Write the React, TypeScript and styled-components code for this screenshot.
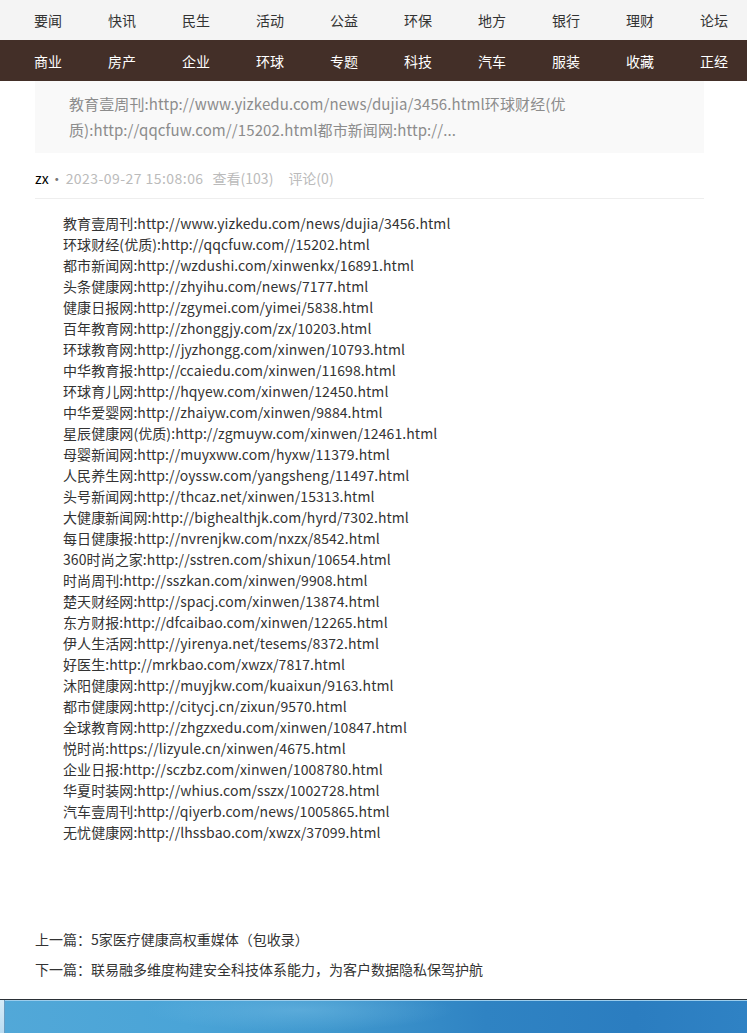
import React from 'react';
import styled, { createGlobalStyle } from 'styled-components';

const Global = createGlobalStyle`
  html, body { margin: 0; padding: 0; background: #fff; }
  body { font-family: "Noto Sans CJK SC", "Microsoft YaHei", sans-serif; }
  p { margin: 0; }
`;

const Page = styled.div`
  display: flex;
  flex-direction: column;
  min-height: 1033px;
  overflow: hidden;
`;

const Nav = styled.nav<{ $dark?: boolean }>`
  display: flex;
  align-items: center;
  gap: 46px;
  padding-left: 34px;
  height: ${p => (p.$dark ? '41px' : '40px')};
  background: ${p => (p.$dark ? '#432f28' : '#f4f4f4')};
`;

const NavLink = styled.a<{ $dark?: boolean }>`
  flex-shrink: 0;
  font-size: 14px;
  line-height: 20px;
  white-space: nowrap;
  text-decoration: none;
  color: ${p => (p.$dark ? '#ffffff' : '#333333')};
`;

const Main = styled.main`
  padding: 0 43px 0 35px;
`;

const Summary = styled.div`
  background: #f9f9f9;
  padding: 10px 34px;
  font-size: 15px;
  line-height: 26px;
  letter-spacing: 0.1px;
  color: #8c8c8c;
`;

const SummaryLine = styled.p`
  white-space: nowrap;
  overflow: hidden;
`;

const Meta = styled.div`
  display: flex;
  align-items: center;
  padding: 15px 0 10px;
  border-bottom: 1px solid #eeeeee;
  font-size: 14px;
  line-height: 20px;
`;

const Author = styled.span`
  color: #000;
`;

const Dot = styled.span`
  color: #777;
  margin: 0 2px 0 1px;
`;

const MetaInfo = styled.span<{ $gap?: number; $spaced?: boolean }>`
  color: #bbbbbb;
  margin-left: ${p => p.$gap ?? 0}px;
  letter-spacing: ${p => (p.$spaced ? '0.45px' : '0')};
`;

const Body = styled.article`
  padding-top: 14px;
`;

const Para = styled.p`
  font-size: 14px;
  line-height: 21px;
  color: #333;
  text-indent: 2em;
  white-space: nowrap;
  letter-spacing: 0.08px;
`;

const Footer = styled.div`
  display: flex;
  flex-direction: column;
  gap: 10px;
  margin-top: 86px;
`;

const FooterLink = styled.a`
  font-size: 14px;
  line-height: 20px;
  color: #333;
  text-decoration: none;
`;

const Taskbar = styled.div`
  margin-top: 20px;
  height: 34px;
  display: flex;
  border-top: 1px solid #2b3036;
  box-shadow: inset 0 1px 0 #9ccdec;
  background:
    radial-gradient(ellipse 220px 30px at 300px 10px, rgba(120, 190, 230, 0.45), rgba(120, 190, 230, 0) 70%),
    linear-gradient(to right, #52a8d8 0%, #4aa4d7 25%, #3f97cd 45%, #2f83c3 65%, #2b7dc0 85%, #2f82c4 100%);
`;

const TaskEdge = styled.div`
  width: 4px;
  background: linear-gradient(to bottom, #d7ecf8, #b9dcf2);
  border-right: 1px solid #6a9cc0;
`;

const top = ['要闻', '快讯', '民生', '活动', '公益', '环保', '地方', '银行', '理财', '论坛'];
const second = ['商业', '房产', '企业', '环球', '专题', '科技', '汽车', '服装', '收藏', '正经'];

const links = [
  '教育壹周刊:http://www.yizkedu.com/news/dujia/3456.html',
  '环球财经(优质):http://qqcfuw.com//15202.html',
  '都市新闻网:http://wzdushi.com/xinwenkx/16891.html',
  '头条健康网:http://zhyihu.com/news/7177.html',
  '健康日报网:http://zgymei.com/yimei/5838.html',
  '百年教育网:http://zhonggjy.com/zx/10203.html',
  '环球教育网:http://jyzhongg.com/xinwen/10793.html',
  '中华教育报:http://ccaiedu.com/xinwen/11698.html',
  '环球育儿网:http://hqyew.com/xinwen/12450.html',
  '中华爱婴网:http://zhaiyw.com/xinwen/9884.html',
  '星辰健康网(优质):http://zgmuyw.com/xinwen/12461.html',
  '母婴新闻网:http://muyxww.com/hyxw/11379.html',
  '人民养生网:http://oyssw.com/yangsheng/11497.html',
  '头号新闻网:http://thcaz.net/xinwen/15313.html',
  '大健康新闻网:http://bighealthjk.com/hyrd/7302.html',
  '每日健康报:http://nvrenjkw.com/nxzx/8542.html',
  '360时尚之家:http://sstren.com/shixun/10654.html',
  '时尚周刊:http://sszkan.com/xinwen/9908.html',
  '楚天财经网:http://spacj.com/xinwen/13874.html',
  '东方财报:http://dfcaibao.com/xinwen/12265.html',
  '伊人生活网:http://yirenya.net/tesems/8372.html',
  '好医生:http://mrkbao.com/xwzx/7817.html',
  '沐阳健康网:http://muyjkw.com/kuaixun/9163.html',
  '都市健康网:http://citycj.cn/zixun/9570.html',
  '全球教育网:http://zhgzxedu.com/xinwen/10847.html',
  '悦时尚:https://lizyule.cn/xinwen/4675.html',
  '企业日报:http://sczbz.com/xinwen/1008780.html',
  '华夏时装网:http://whius.com/sszx/1002728.html',
  '汽车壹周刊:http://qiyerb.com/news/1005865.html',
  '无忧健康网:http://lhssbao.com/xwzx/37099.html',
];

export default function App() {
  return (
    <Page>
      <Global />
      <Nav>
        {top.map(t => (
          <NavLink key={t} href="#">{t}</NavLink>
        ))}
      </Nav>
      <Nav $dark>
        {second.map(t => (
          <NavLink key={t} href="#" $dark>{t}</NavLink>
        ))}
      </Nav>
      <Main>
        <Summary>
          <SummaryLine>教育壹周刊:http://www.yizkedu.com/news/dujia/3456.html环球财经(优</SummaryLine>
          <SummaryLine>质):http://qqcfuw.com//15202.html都市新闻网:http://...</SummaryLine>
        </Summary>
        <Meta>
          <Author>zx</Author>
          <Dot>·</Dot>
          <MetaInfo $spaced>2023-09-27 15:08:06</MetaInfo>
          <MetaInfo $gap={9}>查看(103)</MetaInfo>
          <MetaInfo $gap={15}>评论(0)</MetaInfo>
        </Meta>
        <Body>
          {links.map(l => (
            <Para key={l}>{l}</Para>
          ))}
        </Body>
        <Footer>
          <FooterLink href="#">上一篇：5家医疗健康高权重媒体（包收录）</FooterLink>
          <FooterLink href="#">下一篇：联易融多维度构建安全科技体系能力，为客户数据隐私保驾护航</FooterLink>
        </Footer>
      </Main>
      <Taskbar>
        <TaskEdge />
      </Taskbar>
    </Page>
  );
}
